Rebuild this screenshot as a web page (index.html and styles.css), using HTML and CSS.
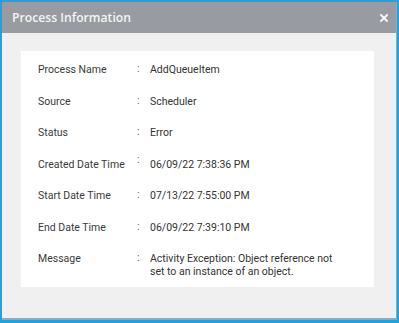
FILE: index.html
```html
<!DOCTYPE html>
<html>
<head>
<meta charset="utf-8">
<link rel="stylesheet" href="styles.css">
</head>
<body>
<div class="frame">
  <div class="dialog">
    <div class="header">
      <span class="title">Process Information</span>
      <span class="close">
        <svg width="8" height="8" viewBox="0 0 8 8"><path d="M1 1L7 7M7 1L1 7" stroke="#ffffff" stroke-width="1.8" stroke-linecap="square"/></svg>
      </span>
    </div>
    <div class="body">
      <div class="card">
        <div class="label">Process Name</div><div class="colon">:</div><div class="value">AddQueueItem</div>
        <div class="label">Source</div><div class="colon">:</div><div class="value">Scheduler</div>
        <div class="label">Status</div><div class="colon">:</div><div class="value">Error</div>
        <div class="label">Created Date Time</div><div class="colon raised">:</div><div class="value">06/09/22 7:38:36 PM</div>
        <div class="label">Start Date Time</div><div class="colon">:</div><div class="value">07/13/22 7:55:00 PM</div>
        <div class="label">End Date Time</div><div class="colon">:</div><div class="value">06/09/22 7:39:10 PM</div>
        <div class="label">Message</div><div class="colon">:</div><div class="value multi">Activity Exception: Object reference not<br>set to an instance of an object.</div>
      </div>
    </div>
  </div>
</div>
</body>
</html>
```

FILE: styles.css
```css
html, body {
  margin: 0;
  padding: 0;
  background: #1ea2e0;
}
.frame {
  width: 399px;
  height: 323px;
  box-sizing: border-box;
  border: 2px solid #1ea2e0;
  border-bottom-width: 3px;
  background: #1ea2e0;
}
.dialog {
  height: 100%;
  display: flex;
  flex-direction: column;
  border-right: 1px solid #a4a4a4;
  border-bottom: 2px solid #a4a4a4;
  box-sizing: border-box;
  background: #f0f0f0;
}
.header {
  height: 31px;
  flex: none;
  background: #989ba1;
  display: flex;
  align-items: center;
  justify-content: space-between;
  padding: 0 8px 0 10px;
}
.title {
  font-family: "Open Sans", sans-serif;
  font-weight: 600;
  font-size: 12.2px;
  color: #f5f5f5;
}
.close {
  display: flex;
  width: 8px;
  height: 8px;
}
.body {
  flex: 1;
  padding: 18px 22px 0 19px;
}
.card {
  background: #ffffff;
  height: 236px;
  box-sizing: border-box;
  padding: 13px 10px 0 17px;
  display: grid;
  grid-template-columns: 99px 13px 1fr;
  grid-auto-rows: 31.5px;
  align-items: start;
  font-family: Roboto, "Liberation Sans", sans-serif;
  font-size: 10.5px;
  line-height: 12px;
  color: #333333;
}
.label {
  color: #3a3a3a;
}
.colon {
  color: #555555;
  margin-top: -1px;
}
.colon.raised {
  margin-top: -5px;
}
.value {
  color: #333333;
}
.value.multi {
  line-height: 12.5px;
  margin-top: 0;
}
```
